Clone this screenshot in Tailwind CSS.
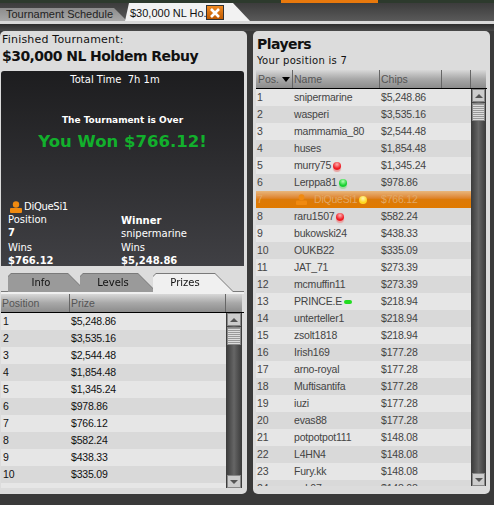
<!DOCTYPE html>
<html lang="en">
<head>
    <meta charset="UTF-8">
    <title>$30,000 NL Holdem Rebuy</title>
    <script src="https://cdn.jsdelivr.net/npm/@tailwindcss/browser@4"></script>
</head>
<body class="bg-[#3a3a3a] w-[494px] h-[505px] overflow-hidden font-['Liberation_Sans',sans-serif] text-[11px]">

<!-- top strip -->
<div class="h-[3px] bg-[#2d3a2d] pl-[281px]"><div class="h-[3px] w-[97px] bg-[#e8780c]"></div></div>

<!-- tab bar -->
<div class="h-[18px] bg-gradient-to-b from-[#3c3c3c] to-[#5a5a5a] flex items-end">
    <div class="w-[127px] h-[13px] bg-gradient-to-b from-[#8c8c8c] to-[#a8a8a8] [clip-path:polygon(0_0,114px_0,100%_100%,0_100%)] pl-[6px] text-[#222] leading-[13px]">Tournament Schedule</div>
    <div class="w-[125px] h-[18px] -ml-[2px] bg-[#f2f2f2] [clip-path:polygon(0_100%,4px_0,108px_0,100%_100%)] pl-[5px] pt-[3px] text-[#111] leading-[14px]">$30,000 NL Ho...</div>
    <div class="-ml-[44px] mb-px w-[18px] h-[15px] bg-gradient-to-b from-[#f08a20] to-[#c05a00] border border-[#333] flex items-center justify-center z-10">
        <svg width="12" height="10" viewBox="0 0 12 10"><path d="M2 1l8 8M10 1l-8 8" stroke="#fff" stroke-width="2.6"/></svg>
    </div>
</div>
<div class="h-[3px] bg-[#d8d8d8]"></div>
<div class="h-[7px] bg-gradient-to-b from-[#2c2c2c] to-[#4a4a4a]"></div>

<div class="flex gap-[6px] h-[463px]">

    <!-- left panel -->
    <div class="w-[247px] bg-[#dcdcdc] rounded-[5px] rounded-bl-none pl-px pr-[3px] flex flex-col">
        <p class="pt-[2px] h-[14px] leading-[14px] text-[11px] text-[#111] font-['DejaVu_Sans',sans-serif] tracking-[0.2px] pl-px">Finished Tournament:</p>
        <h1 class="h-[26px] leading-[22px] text-[14px] tracking-[-0.55px] font-bold text-[#111] font-['DejaVu_Sans',sans-serif] pl-px">$30,000 NL Holdem Rebuy</h1>
        <div class="h-[195px] rounded-t-[3px] bg-gradient-to-b from-[#1d1d1f] to-[#404044] text-white font-['DejaVu_Sans',sans-serif] text-[10px] flex flex-col">
            <p class="text-center pt-[2px] pr-[15px] leading-[14px]">Total Time &nbsp;7h 1m</p>
            <p class="text-center mt-[26px] leading-[14px] text-[9px] font-bold">The Tournament is Over</p>
            <p class="text-center mt-[3px] leading-[24px] text-[16.5px] font-bold text-[#12b02c]">You Won $766.12!</p>
            <div class="flex items-center pl-[8px] mt-[45px] h-[16px] tracking-[-0.3px]">
                <svg width="14" height="12" viewBox="0 0 14 12"><circle cx="7" cy="3.5" r="3.2" fill="#f08a10"/><rect x="1" y="7" width="12" height="5" rx="1" fill="#f08a10"/></svg>
                <span class="pl-px">DiQueSi1</span>
            </div>
            <div class="grid grid-cols-[113px_1fr] pl-[7px] -mt-px">
                <div class="flex flex-col">
                    <span class="leading-[14px]">Position</span>
                    <b class="leading-[12px] text-[10px]">7</b>
                    <span class="leading-[13px] mt-[2px]">Wins</span>
                    <b class="leading-[13px] text-[10px]">$766.12</b>
                </div>
                <div class="flex flex-col">
                    <b class="leading-[14px] mt-px">Winner</b>
                    <span class="leading-[11px]">snipermarine</span>
                    <span class="leading-[13px] mt-[2px]">Wins</span>
                    <b class="leading-[13px] text-[10px]">$5,248.86</b>
                </div>
            </div>
        </div>

        <!-- sub tabs -->
        <div class="h-[28px] pt-[8px] pl-[7px] flex font-['DejaVu_Sans',sans-serif] text-[10px] text-[#111] border-b-[2px] border-[#f0f0f0] [filter:drop-shadow(0_-1px_0_#7a7a7a)]">
            <div class="w-[78px] h-[18px] bg-[#9a9a9a] [clip-path:polygon(3px_0,60px_0,100%_100%,0_100%,0_3px)] text-center pr-[12px] leading-[18px]">Info</div>
            <div class="-ml-[6px] w-[76px] h-[18px] bg-[#9a9a9a] [clip-path:polygon(3px_0,58px_0,100%_100%,0_100%,0_3px)] text-center pr-[10px] leading-[18px]">Levels</div>
            <div class="-ml-[3px] w-[80px] h-[18px] bg-[#f0f0f0] [clip-path:polygon(3px_0,62px_0,100%_100%,0_100%,0_3px)] text-center pr-[16px] leading-[18px]">Prizes</div>
        </div>

        <!-- prizes table -->
        <div class="flex h-[18px] text-[#555] leading-[18px] text-[10.5px]">
            <div class="w-[69px] pl-px bg-gradient-to-b from-[#d8d8d8] via-[#a8a8a8] to-[#8c8c8c] border-r border-[#666]">Position</div>
            <div class="w-[156px] pl-px bg-gradient-to-b from-[#d8d8d8] via-[#a8a8a8] to-[#8c8c8c] border-r border-[#666]">Prize</div>
            <div class="w-[16px] bg-gradient-to-b from-[#d8d8d8] via-[#a8a8a8] to-[#8c8c8c]"></div>
        </div>
        <div class="h-px bg-black"></div>
        <div class="flex h-[175px] text-[#111] text-[10.5px] tracking-[-0.2px]">
            <div class="w-[225px] bg-[#e6e6e6] flex flex-col">
                <div class="flex h-[17px] leading-[17px] bg-[#e6e6e6]"><span class="w-[70px] pl-[2px]">1</span><span>$5,248.86</span></div>
                <div class="flex h-[17px] leading-[17px] bg-[#d9d9d9]"><span class="w-[70px] pl-[2px]">2</span><span>$3,535.16</span></div>
                <div class="flex h-[17px] leading-[17px] bg-[#e6e6e6]"><span class="w-[70px] pl-[2px]">3</span><span>$2,544.48</span></div>
                <div class="flex h-[17px] leading-[17px] bg-[#d9d9d9]"><span class="w-[70px] pl-[2px]">4</span><span>$1,854.48</span></div>
                <div class="flex h-[17px] leading-[17px] bg-[#e6e6e6]"><span class="w-[70px] pl-[2px]">5</span><span>$1,345.24</span></div>
                <div class="flex h-[17px] leading-[17px] bg-[#d9d9d9]"><span class="w-[70px] pl-[2px]">6</span><span>$978.86</span></div>
                <div class="flex h-[17px] leading-[17px] bg-[#e6e6e6]"><span class="w-[70px] pl-[2px]">7</span><span>$766.12</span></div>
                <div class="flex h-[17px] leading-[17px] bg-[#d9d9d9]"><span class="w-[70px] pl-[2px]">8</span><span>$582.24</span></div>
                <div class="flex h-[17px] leading-[17px] bg-[#e6e6e6]"><span class="w-[70px] pl-[2px]">9</span><span>$438.33</span></div>
                <div class="flex h-[17px] leading-[17px] bg-[#d9d9d9]"><span class="w-[70px] pl-[2px]">10</span><span>$335.09</span></div>
            </div>
            <div class="w-[16px] bg-gradient-to-r from-[#3a3a3a] via-[#666] to-[#3a3a3a] flex flex-col justify-between">
                <div>
                    <div class="h-[13px] mx-px bg-[#ccc] border border-[#888] flex items-center justify-center"><div class="border-x-[4px] border-x-transparent border-b-[4px] border-b-[#555]"></div></div>
                    <div class="h-[18px] mx-px mt-px bg-[repeating-linear-gradient(#999_0_1px,#ddd_1px_2px)] border border-[#888]"></div>
                </div>
                <div class="h-[13px] mx-px bg-[#ccc] border border-[#888] flex items-center justify-center"><div class="border-x-[4px] border-x-transparent border-t-[4px] border-t-[#555]"></div></div>
            </div>
        </div>
    </div>

    <!-- right panel -->
    <div class="w-[237px] bg-[#dcdcdc] rounded-[5px] px-[3px] flex flex-col">
        <h2 class="pt-[3px] pl-px h-[23px] leading-[20px] text-[14px] tracking-[-0.55px] font-bold text-[#111] font-['DejaVu_Sans',sans-serif]">Players</h2>
        <p class="h-[13px] pl-px leading-[13px] text-[10px] text-[#111] font-['DejaVu_Sans',sans-serif] tracking-[0.3px]">Your position is 7</p>
        <div class="h-[3px]"></div>
        <div class="flex h-[18px] text-[#555] leading-[18px] text-[10.5px]">
            <div class="w-[37px] pl-[2px] bg-gradient-to-b from-[#d8d8d8] via-[#a8a8a8] to-[#8c8c8c] border-r border-[#666] flex items-center gap-[3px]">Pos.<div class="border-x-[4px] border-x-transparent border-t-[5px] border-t-black"></div></div>
            <div class="w-[87px] pl-px bg-gradient-to-b from-[#d8d8d8] via-[#a8a8a8] to-[#8c8c8c] border-r border-[#666]">Name</div>
            <div class="w-[62px] pl-px bg-gradient-to-b from-[#d8d8d8] via-[#a8a8a8] to-[#8c8c8c] border-r border-[#666]">Chips</div>
            <div class="w-[29px] bg-gradient-to-b from-[#d8d8d8] via-[#a8a8a8] to-[#8c8c8c] border-r border-[#666]"></div>
            <div class="w-[15px] bg-gradient-to-b from-[#d8d8d8] via-[#a8a8a8] to-[#8c8c8c]"></div>
        </div>
        <div class="h-px bg-black"></div>
        <div class="flex h-[397px] text-[#444] text-[10.5px] tracking-[-0.2px]">
            <div class="w-[215px] flex flex-col overflow-hidden">
                <div class="flex shrink-0 h-[17px] leading-[17px] bg-[#e6e6e6]"><span class="w-[38px] pl-px">1</span><span class="w-[87px]">snipermarine</span><span>$5,248.86</span></div>
                <div class="flex shrink-0 h-[17px] leading-[17px] bg-[#d9d9d9]"><span class="w-[38px] pl-px">2</span><span class="w-[87px]">wasperi</span><span>$3,535.16</span></div>
                <div class="flex shrink-0 h-[17px] leading-[17px] bg-[#e6e6e6]"><span class="w-[38px] pl-px">3</span><span class="w-[87px]">mammamia_80</span><span>$2,544.48</span></div>
                <div class="flex shrink-0 h-[17px] leading-[17px] bg-[#d9d9d9]"><span class="w-[38px] pl-px">4</span><span class="w-[87px]">huses</span><span>$1,854.48</span></div>
                <div class="flex shrink-0 h-[17px] leading-[17px] bg-[#e6e6e6]"><span class="w-[38px] pl-px">5</span><span class="w-[87px] flex items-center gap-[2px]">murry75<i class="size-[8px] rounded-full bg-[radial-gradient(circle_at_50%_30%,#ffb0b0,#ee1c24_60%)] shadow-[0_2px_1px_#e9a0a0]"></i></span><span>$1,345.24</span></div>
                <div class="flex shrink-0 h-[17px] leading-[17px] bg-[#d9d9d9]"><span class="w-[38px] pl-px">6</span><span class="w-[87px] flex items-center gap-[2px]">Lerppa81<i class="size-[8px] rounded-full bg-[radial-gradient(circle_at_50%_30%,#b0ffb0,#18d030_60%)] shadow-[0_2px_1px_#a0d8a0]"></i></span><span>$978.86</span></div>
                <div class="flex shrink-0 h-[17px] leading-[17px] bg-gradient-to-b from-[#e8b67a] via-[#dc7a08] to-[#e07a00] text-[#e2a865]"><span class="w-[38px] pl-px">7</span><span class="w-[87px] flex items-center gap-[2px]"><svg class="shrink-0 ml-px mr-[4px]" width="13" height="11" viewBox="0 0 14 12"><circle cx="7" cy="3.5" r="3.2" fill="#f08a10"/><rect x="1" y="7" width="12" height="5" rx="1" fill="#f08a10"/></svg>DiQueSi1<i class="size-[8px] rounded-full bg-[radial-gradient(circle_at_50%_30%,#fff6b0,#ffd820_60%)]"></i></span><span>$766.12</span></div>
                <div class="flex shrink-0 h-[17px] leading-[17px] bg-[#d9d9d9]"><span class="w-[38px] pl-px">8</span><span class="w-[87px] flex items-center gap-[2px]">raru1507<i class="size-[8px] rounded-full bg-[radial-gradient(circle_at_50%_30%,#ffb0b0,#ee1c24_60%)] shadow-[0_2px_1px_#e9a0a0]"></i></span><span>$582.24</span></div>
                <div class="flex shrink-0 h-[17px] leading-[17px] bg-[#e6e6e6]"><span class="w-[38px] pl-px">9</span><span class="w-[87px]">bukowski24</span><span>$438.33</span></div>
                <div class="flex shrink-0 h-[17px] leading-[17px] bg-[#d9d9d9]"><span class="w-[38px] pl-px">10</span><span class="w-[87px]">OUKB22</span><span>$335.09</span></div>
                <div class="flex shrink-0 h-[17px] leading-[17px] bg-[#e6e6e6]"><span class="w-[38px] pl-px">11</span><span class="w-[87px]">JAT_71</span><span>$273.39</span></div>
                <div class="flex shrink-0 h-[17px] leading-[17px] bg-[#d9d9d9]"><span class="w-[38px] pl-px">12</span><span class="w-[87px]">mcmuffin11</span><span>$273.39</span></div>
                <div class="flex shrink-0 h-[17px] leading-[17px] bg-[#e6e6e6]"><span class="w-[38px] pl-px">13</span><span class="w-[87px] flex items-center gap-[2px]">PRINCE.E<i class="w-[8px] h-[4px] rounded-full bg-[#22dd22]"></i></span><span>$218.94</span></div>
                <div class="flex shrink-0 h-[17px] leading-[17px] bg-[#d9d9d9]"><span class="w-[38px] pl-px">14</span><span class="w-[87px]">unterteller1</span><span>$218.94</span></div>
                <div class="flex shrink-0 h-[17px] leading-[17px] bg-[#e6e6e6]"><span class="w-[38px] pl-px">15</span><span class="w-[87px]">zsolt1818</span><span>$218.94</span></div>
                <div class="flex shrink-0 h-[17px] leading-[17px] bg-[#d9d9d9]"><span class="w-[38px] pl-px">16</span><span class="w-[87px]">Irish169</span><span>$177.28</span></div>
                <div class="flex shrink-0 h-[17px] leading-[17px] bg-[#e6e6e6]"><span class="w-[38px] pl-px">17</span><span class="w-[87px]">arno-royal</span><span>$177.28</span></div>
                <div class="flex shrink-0 h-[17px] leading-[17px] bg-[#d9d9d9]"><span class="w-[38px] pl-px">18</span><span class="w-[87px]">Muftisantifa</span><span>$177.28</span></div>
                <div class="flex shrink-0 h-[17px] leading-[17px] bg-[#e6e6e6]"><span class="w-[38px] pl-px">19</span><span class="w-[87px]">iuzi</span><span>$177.28</span></div>
                <div class="flex shrink-0 h-[17px] leading-[17px] bg-[#d9d9d9]"><span class="w-[38px] pl-px">20</span><span class="w-[87px]">evas88</span><span>$177.28</span></div>
                <div class="flex shrink-0 h-[17px] leading-[17px] bg-[#e6e6e6]"><span class="w-[38px] pl-px">21</span><span class="w-[87px]">potpotpot111</span><span>$148.08</span></div>
                <div class="flex shrink-0 h-[17px] leading-[17px] bg-[#d9d9d9]"><span class="w-[38px] pl-px">22</span><span class="w-[87px]">L4HN4</span><span>$148.08</span></div>
                <div class="flex shrink-0 h-[17px] leading-[17px] bg-[#e6e6e6]"><span class="w-[38px] pl-px">23</span><span class="w-[87px]">Fury.kk</span><span>$148.08</span></div>
                <div class="flex shrink-0 h-[17px] leading-[17px] bg-[#d9d9d9]"><span class="w-[38px] pl-px">24</span><span class="w-[87px]">ank07</span><span>$148.08</span></div>
            </div>
            <div class="w-[15px] bg-gradient-to-r from-[#3a3a3a] via-[#666] to-[#3a3a3a] flex flex-col justify-between">
                <div>
                    <div class="h-[13px] mx-px bg-[#ccc] border border-[#888] flex items-center justify-center"><div class="border-x-[4px] border-x-transparent border-b-[4px] border-b-[#555]"></div></div>
                    <div class="h-[18px] mx-px mt-px bg-[repeating-linear-gradient(#999_0_1px,#ddd_1px_2px)] border border-[#888]"></div>
                </div>
                <div class="h-[13px] mx-px bg-[#ccc] border border-[#888] flex items-center justify-center"><div class="border-x-[4px] border-x-transparent border-t-[4px] border-t-[#555]"></div></div>
            </div>
        </div>
    </div>
</div>
</body>
</html>
